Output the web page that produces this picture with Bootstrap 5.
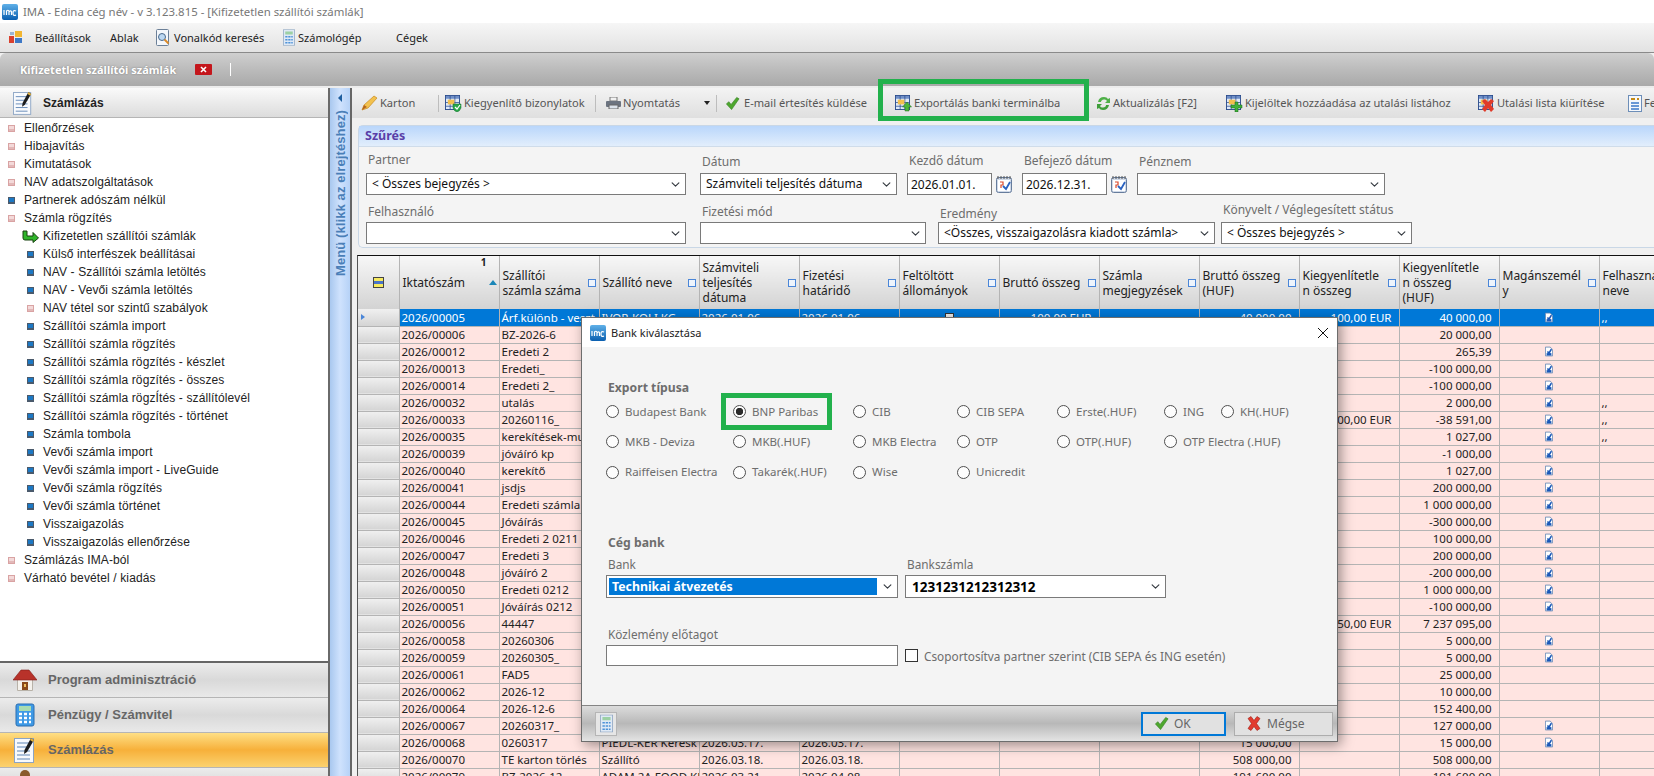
<!DOCTYPE html>
<html lang="hu">
<head>
<meta charset="UTF-8">
<title>IMA - Kifizetetlen szállítói számlák</title>
<link href="https://cdn.jsdelivr.net/npm/bootstrap@5.3.2/dist/css/bootstrap.min.css" rel="stylesheet">
<style>
html,body{height:776px;overflow:hidden}
body{position:relative;width:1654px;background:#f0f0f0;font-family:"Noto Sans","Liberation Sans",sans-serif;font-size:12px;color:#222;line-height:14px}
svg{flex:none;display:block}
.title-strip{height:23px;background:#fff;color:#777;padding-left:2px;gap:5px;font-size:11.4px}
.menu-strip{height:30px;background:linear-gradient(#f6f6f6,#e2e2e2);border-bottom:1px solid #8a8a8a;padding-left:9px;font-size:11px}
.menu-strip span{white-space:nowrap}
.mi-a{margin-left:13px;width:75px}.mi-b{width:45px}.mi-c{margin-left:3px;width:109px}.mi-d{margin-left:3px;width:98px}
.tab-strip{height:33px;background:linear-gradient(#cfcfcf,#bdbdbd 45%,#a9a9a9);border-radius:6px 6px 0 0;padding-left:20px;color:#fff;font-weight:700;font-size:11px;text-shadow:0 0 2px #777}
.tab-x{margin-left:19px}
.tab-sep{width:1px;height:13px;background:#fff;margin-left:18px}
.work-area{height:691px;border-top:2px solid #ececec}
.side-pane{width:330px;background:#fff;border-right:2px solid #6a6a6a}
.side-head{height:30px;background:linear-gradient(#fafafa,#dcdcdc);border-bottom:1px solid #b5b5b5;padding-left:13px;gap:10px;font-weight:700;color:#222;font-family:"Liberation Sans",sans-serif}
.tree{height:543px;padding-top:1px;font-family:"Liberation Sans",sans-serif;letter-spacing:.12px;margin:0}
.tree li{height:18px;display:flex;align-items:center;white-space:nowrap;padding-left:8px}
.tree li.sub{padding-left:27px}
.tree li.now{padding-left:22px}
.bul{width:7px;height:7px;margin-right:9px;flex:none}
.bul-p{background:#f3d9d9;border:1px solid #d9a3a3;box-shadow:inset 0 -2px 0 #e2b8b8}
.bul-b{background:#1c78c4;border:1px solid #4a5a6c;border-bottom-width:2px}
.acc-box{border-top:2px solid #666}
.acc-item{height:35px;background:linear-gradient(#ececec,#d9d9d9 50%,#e9e9e9);border-bottom:1px solid #b5b5b5;padding-left:13px;color:#666;font-weight:700;font-family:"Liberation Sans",sans-serif;font-size:13px;gap:11px}
.acc-item.on{background:linear-gradient(#fedf85,#f7b03a 50%,#fbd26f)}
.acc-ico{width:24px}
.split-bar{width:20px;background:linear-gradient(90deg,#a9c8ef,#cfe2fd 50%,#b6d2f7);padding-top:6px}
.split-txt{writing-mode:vertical-rl;transform:rotate(180deg);margin-top:8px;font:700 13px "Liberation Sans",sans-serif;color:#4a7fb8;white-space:nowrap;letter-spacing:.1px}
.split-arrow{width:0;height:0;border-top:4px solid transparent;border-bottom:4px solid transparent;border-right:4px solid #1f5f9f}
.right-pane{width:1304px;border-left:2px solid #666;background:#f0f0f0}
.tool-strip{height:30px;background:linear-gradient(#f3f3f3,#dfdfdf);white-space:nowrap;font-size:11.1px}
.tool-strip>*{flex:none}
.tool-item{height:30px;color:#555;gap:2px}
.tool-sep{width:1px;height:17px;background:#bdbdbd}
.t1{margin-left:9px;width:77px}.t2{margin-left:6px;width:150px}.t3{margin-left:10px;width:98px}.t4{margin-left:8px;width:158px}
.t4 svg{margin-right:2px}
.t5{margin-left:12px;width:201px}.t6{width:130px}.t7{width:252px}.t8{width:150px}
.tool-caret{width:0;height:0;border-left:3px solid transparent;border-right:3px solid transparent;border-top:4px solid #222;margin-right:6px}
.mark-box{position:relative}
.mark-box::after{content:"";position:absolute;border:5px solid #22b14c;pointer-events:none;z-index:3}
.t5.mark-box::after{left:-17px;top:-9px;width:211px;height:42px}
.radio-cell.mark-box::after{left:-12px;top:-4px;width:111px;height:37px}
.filter-box{margin:7px 0 0 6px;height:123px;background:#f4f4f4;border:1px solid #c9d7e6;border-right:0;border-radius:5px 0 0 5px}
.filter-head{height:21px;background:linear-gradient(#b9d6fb,#e2eefc);border-bottom:1px solid #cfdcea;color:#5a3fa8;font-weight:700;font-size:12.5px;padding-left:6px}
.filter-row{padding-left:7px}
.fr1{height:48px}.fr2{height:49px}
.fld{justify-content:flex-end}
.fld .form-label{margin:0 0 6px;padding-left:2px;color:#6d6d6d;white-space:nowrap;line-height:14px}
.fld .lb-a{margin-bottom:4px}.fld .lb-b{margin-bottom:1px}.fld .lb-c{margin-bottom:5px}.fld .lb-d{margin-bottom:3px}.fld .lb-e{margin-bottom:5px}
.w-a{width:320px;margin-right:14px}.w-b{width:197px;margin-right:10px}.w-c{width:115px}.w-d{width:248px}
.w-e{width:226px;margin-right:12px}.w-f{width:277px;margin-right:6px}.w-g{width:191px}
.win-sel,.win-inp{height:22px;min-height:0;border:1px solid #7a7a7a;border-radius:0;padding:0 18px 0 5px;font-size:12px;color:#111;background-color:#fff;box-shadow:none;line-height:20px}
.win-sel{background-position:right 4px center;background-size:11px 9px}
.win-date{width:85px;padding:0 2px 0 3px}
.grid-wrap{margin:7px 0 0 5px;height:521px;overflow:hidden;border-top:1px solid #111;border-left:1px solid #555}
.inv-tbl{table-layout:fixed;width:1300px;margin:0;border-collapse:collapse;font-size:11.5px;color:#222}
.inv-tbl th,.inv-tbl td{padding:0 2px;border:1px solid #b4b4b4;border-left:0;border-top:0;white-space:nowrap;overflow:hidden;font-weight:400;vertical-align:middle;box-shadow:none}
.inv-tbl th{height:53px;background:linear-gradient(#f7f7f7,#d3d3d3);font-size:12px;line-height:15px;position:relative;padding-left:3px;border-bottom:0}
.inv-tbl td{height:17px;line-height:15px;background:#ffe4e1;color:#222;padding-left:2px}
.inv-tbl td.num{text-align:right;padding-right:7px}
.inv-tbl td.rh{background:linear-gradient(#f0f0f0,#d4d4d4);padding:0 0 0 3px}
.inv-tbl tr.sel td:not(.rh){background:#0078d7;color:#fff}
.col-rh{width:41px}.col-n{width:100px}
.head-flex{gap:2px}
.flt-sq{width:8px;height:8px;border:1px solid #4a86d8;background:#eef4fc;flex:none;margin-right:1px}
.sort-no{position:absolute;right:12px;top:0;font-size:10px;font-weight:700;line-height:12px}
.sort-up{width:0;height:0;border-left:4px solid transparent;border-right:4px solid transparent;border-bottom:5px solid #1b87b8;flex:none}
.row-arrow{width:0;height:0;border-top:3px solid transparent;border-bottom:3px solid transparent;border-left:4px solid #4a86d8}
.mag-ico{margin:auto}
.dlg{position:absolute;left:581px;top:317px;width:757px;height:425px;z-index:5;background:#f4f4f4;border:1px solid #6d6d6d;box-shadow:3px 3px 12px rgba(0,0,0,.4);color:#6d6d6d}
.dlg-title{height:29px;background:#fff;padding-left:8px;gap:5px;color:#222;font-size:11px}
.dlg-x{margin-left:auto;margin-right:8px;width:12px;height:12px}
.dlg-body{padding-left:24px;font-size:11.8px}
.sec-cap{font-weight:700;color:#6d6d6d;padding-left:2px;font-size:12.2px}
.cap-a{margin-top:34px;height:14px}
.radio-grid{display:grid;grid-template-columns:127px 120px 104px 100px 107px 57px 100px;grid-template-rows:29px 31px 30px;margin-top:2px;font-size:11.5px}
.radio-cell{display:flex;align-items:center;gap:6px;white-space:nowrap}
.radio-cell .form-check-input{width:13px;height:13px;margin:0;border:1.5px solid #4f4f4f;background-color:#fdfdfd;flex:none;box-shadow:none}
.radio-cell .form-check-input:checked{background-color:#fdfdfd;border-color:#4f4f4f;background-image:radial-gradient(circle,#2b2b2b 0 3.4px,transparent 4px)}
.cap-b{margin-top:49px;height:14px}
.bank-labels{margin-top:7px;gap:7px}
.bl-a{width:292px;padding-left:2px}.bl-b{width:261px;padding-left:2px}
.bank-sel{width:292px;height:23px;padding:2px 20px 2px 2px;color:#fff;font-weight:700;font-size:12.3px;line-height:17px}
.bank-sel span{display:block;height:17px;background:#0078d7;padding-left:3px}
.acct-sel{width:261px;height:23px;padding-left:6px;font-weight:700;font-size:13.5px;color:#000}
.bank-row{margin-top:4px;gap:7px}
.note-label{margin-top:29px;padding-left:2px}
.note-row{margin-top:4px;gap:7px;align-items:center}
.note-inp{width:292px;height:21px}
.note-row .form-check-input{width:13px;height:13px;margin:0 6px 0 0;border:1px solid #333;border-radius:0;background-color:#fdfdfd;flex:none;box-shadow:none}
.dlg-foot{height:36px;margin-top:auto;background:linear-gradient(#dcdcdc,#b8b8b8 50%,#e4e4e4);border-top:1px solid #858585;padding:5px 4px 5px 13px;gap:8px}
.foot-calc{width:22px;height:24px;padding:0;background:#e6e6e6;border:1px solid #b5b5b5;border-radius:0}
.foot-btn{height:24px;padding:0 0 0 11px;border-radius:0;background:#e1e1e1;border:1px solid #adadad;font-size:12px;color:#666;gap:5px}
.foot-btn:hover{background:#e1e1e1;color:#666}
.btn-ok{width:85px;border:2px solid #0078d7;margin-left:auto}
.btn-no{width:99px}
</style>
</head>
<body>
<svg width="0" height="0" class="position-absolute">
  <defs>
    <linearGradient id="logoFill" x1="0" y1="0" x2="0" y2="1"><stop offset="0" stop-color="#5fb0e8"/><stop offset="1" stop-color="#0a5fb0"/></linearGradient>
    <symbol id="i-logo" viewBox="0 0 16 16"><rect width="16" height="16" rx="2" fill="url(#logoFill)"/><path d="M2 6v5M4.500 11V7q1.500-1.500 2.500 0v4M7 8q1.500-2 2.500-.5V11M14 7q-3-1.500-3 2t3 2" fill="none" stroke="#fff" stroke-width="1.200"/></symbol>
    <symbol id="i-tbl" viewBox="0 0 16 16"><rect x=".5" y=".5" width="15" height="15" fill="#dfe9f8" stroke="#2b4c8c"/><rect x="1" y="1" width="14" height="3" fill="#6f8fc8"/><path d="M1 8h14M1 12h14M5.500 1v14M10.500 1v14" stroke="#2b4c8c" stroke-width=".8"/><rect x="3" y="5" width="7" height="5" fill="#f3c04e"/></symbol>
    <symbol id="i-check" viewBox="0 0 16 16"><path d="M1.500 8.500 4 6l2.500 3L12.500 1.500 15 3l-8 11.500z" fill="#4ea72e" stroke="#2f7a1c" stroke-width=".6"/></symbol>
    <symbol id="i-cross" viewBox="0 0 16 16"><path d="M2 3 5 1l3 4 3-4 3 2-3.500 5L14 13l-3 2-3-4-3 4-3-2 3.500-5z" fill="#e23b2e" stroke="#9c1f16" stroke-width=".6"/></symbol>
    <symbol id="i-note" viewBox="0 0 22 26"><rect x=".5" y="1.500" width="19" height="24" fill="#f8fafd" stroke="#8ba4c4"/><path d="M3 6h13M3 10h13M3 14h13M3 18h13M3 22h13" stroke="#5f85b5"/><path d="M17 1l3 2-7 12-3 2 .5-4z" fill="#1c1c1c"/><path d="M17 1l3 2-1 2-3-2z" fill="#e2b13c"/></symbol>
    <symbol id="i-doc" viewBox="0 0 10 12"><path d="M.5.5h6l3 3v8h-9z" fill="#fff" stroke="#5b7fae"/><path d="M3 6l2 2 3-5" fill="none" stroke="#1a58b8" stroke-width="2"/><rect x="2" y="8" width="6" height="3" fill="#1a58b8"/></symbol>
    <symbol id="i-cal" viewBox="0 0 16 18"><rect x=".5" y="2.500" width="15" height="15" rx="2" fill="#cfd9e8" stroke="#667c9c"/><rect x="2" y="5" width="12" height="11" fill="#fff"/><path d="M2 1v3M5 1v3M8 1v3M11 1v3M14 1v3" stroke="#555"/><path d="M4 7h3v3H5v3" fill="none" stroke="#d9482b" stroke-width="1.200"/><path d="M7 11l3 3 4-7" fill="none" stroke="#2a62c0" stroke-width="1.800"/></symbol>
    <symbol id="i-calc" viewBox="0 0 16 22"><rect x=".5" y=".5" width="15" height="21" fill="#dfe9f5" stroke="#8fa6c2"/><rect x="3" y="3" width="10" height="4" fill="#9cd0a4"/><path d="M3 10h3M7 10h3M11 10h2M3 14h3M7 14h3M11 14h2M3 18h3M7 18h3M11 18h2" stroke="#4f93d8" stroke-width="2"/></symbol>
  </defs>
</svg>

<header>
  <div class="title-strip d-flex align-items-center">
    <svg width="16" height="16"><use href="#i-logo"/></svg>
    <span>IMA - Edina cég név - v 3.123.815 - [Kifizetetlen szállítói számlák]</span>
  </div>
  <nav class="menu-strip d-flex align-items-center">
    <svg width="13" height="13" viewBox="0 0 13 13"><rect x="0" y="5" width="5" height="7" fill="#d9402e"/><rect x="6" y="0" width="7" height="6" fill="#f2b632"/><rect x="6" y="7" width="7" height="5" fill="#3d78c6"/><rect x="1" y="1" width="4" height="3" fill="#9bb4d4"/></svg>
    <span class="mi-a">Beállítások</span>
    <span class="mi-b">Ablak</span>
    <svg width="16" height="17" viewBox="0 0 16 17"><rect x="1.500" y=".5" width="12" height="16" rx="1" fill="#f4f7fb" stroke="#6c8098"/><circle cx="7" cy="8" r="3.500" fill="#bcd8f2" stroke="#4a6a8c"/><path d="M9.500 10.500l4 4" stroke="#d98a2b" stroke-width="2"/></svg>
    <span class="mi-c">Vonalkód keresés</span>
    <svg width="12" height="17" viewBox="0 0 16 22"><use href="#i-calc"/></svg>
    <span class="mi-d">Számológép</span>
    <span>Cégek</span>
  </nav>
  <div class="tab-strip d-flex align-items-center">
    <span>Kifizetetlen szállítói számlák</span>
    <svg class="tab-x" width="17" height="11" viewBox="0 0 17 11"><rect width="17" height="11" rx="1" fill="#c4161c"/><path d="M6 3l5 5M11 3l-5 5" stroke="#fff" stroke-width="1.600"/></svg>
    <span class="tab-sep"></span>
  </div>
</header>

<main class="work-area d-flex">
  <aside class="side-pane flex-none">
    <div class="side-head d-flex align-items-center">
      <svg width="20" height="24"><use href="#i-note"/></svg>
      <span>Számlázás</span>
    </div>
    <ul class="tree list-unstyled">
      <li><span class="bul bul-p"></span>Ellenőrzések</li>
      <li><span class="bul bul-p"></span>Hibajavítás</li>
      <li><span class="bul bul-p"></span>Kimutatások</li>
      <li><span class="bul bul-p"></span>NAV adatszolgáltatások</li>
      <li><span class="bul bul-b"></span>Partnerek adószám nélkül</li>
      <li><span class="bul bul-p"></span>Számla rögzítés</li>
      <li class="now"><svg class="me-1" width="17" height="13" viewBox="0 0 17 13"><path d="M1 1h4v5h6V2.500L16.500 8 11 12.500V10H3Q1 10 1 8z" fill="#2fb52a" stroke="#16400f"/></svg>Kifizetetlen szállítói számlák</li>
      <li class="sub"><span class="bul bul-b"></span>Külső interfészek beállításai</li>
      <li class="sub"><span class="bul bul-b"></span>NAV - Szállítói számla letöltés</li>
      <li class="sub"><span class="bul bul-b"></span>NAV - Vevői számla letöltés</li>
      <li class="sub"><span class="bul bul-p"></span>NAV tétel sor szintű szabályok</li>
      <li class="sub"><span class="bul bul-b"></span>Szállítói számla import</li>
      <li class="sub"><span class="bul bul-b"></span>Szállítói számla rögzítés</li>
      <li class="sub"><span class="bul bul-b"></span>Szállítói számla rögzítés - készlet</li>
      <li class="sub"><span class="bul bul-b"></span>Szállítói számla rögzítés - összes</li>
      <li class="sub"><span class="bul bul-b"></span>Szállítói számla rögzÍtés - szállítólevél</li>
      <li class="sub"><span class="bul bul-b"></span>Szállítói számla rögzítés - történet</li>
      <li class="sub"><span class="bul bul-b"></span>Számla tombola</li>
      <li class="sub"><span class="bul bul-b"></span>Vevői számla import</li>
      <li class="sub"><span class="bul bul-b"></span>Vevői számla import - LiveGuide</li>
      <li class="sub"><span class="bul bul-b"></span>Vevői számla rögzítés</li>
      <li class="sub"><span class="bul bul-b"></span>Vevői számla történet</li>
      <li class="sub"><span class="bul bul-b"></span>Visszaigazolás</li>
      <li class="sub"><span class="bul bul-b"></span>Visszaigazolás ellenőrzése</li>
      <li><span class="bul bul-p"></span>Számlázás IMA-ból</li>
      <li><span class="bul bul-p"></span>Várható bevétel / kiadás</li>
    </ul>
    <div class="acc-box">
      <div class="acc-item d-flex align-items-center">
        <svg class="acc-ico" width="24" height="22" viewBox="0 0 24 22"><path d="M4.500 10.500h15v11h-15z" fill="#f4f1ec" stroke="#b8b2a8"/><rect x="9" y="13" width="6" height="8" fill="#8a4a1c"/><rect x="11" y="15" width="2" height="3" fill="#f0c060"/><path d="M0 11 8 1h8l8 10z" fill="#b8322a" stroke="#7c1c18" stroke-width=".6"/></svg>
        <span>Program adminisztráció</span>
      </div>
      <div class="acc-item d-flex align-items-center">
        <svg class="acc-ico" width="24" height="24" viewBox="0 0 24 24"><rect x="3" y="1" width="18" height="22" rx="2" fill="#3f9ae6" stroke="#2c6fb0"/><rect x="6" y="3" width="12" height="5" fill="#a8dcb0"/><path d="M6 11h3M11 11h3M16 11h2M6 15h3M11 15h3M16 15h2M6 19h3M11 19h3M16 19h2" stroke="#fff" stroke-width="2.500"/></svg>
        <span>Pénzügy / Számvitel</span>
      </div>
      <div class="acc-item on d-flex align-items-center">
        <svg class="acc-ico" width="22" height="26" viewBox="0 0 22 26"><use href="#i-note"/></svg>
        <span>Számlázás</span>
      </div>
      <div class="acc-item d-flex align-items-start">
        <svg class="acc-ico" width="24" height="24" viewBox="0 0 24 24"><circle cx="12" cy="7" r="5" fill="#8a5a2c"/><path d="M3 24q1-10 9-10t9 10z" fill="#3f5f8f"/></svg>
      </div>
    </div>
  </aside>

  <div class="split-bar d-flex flex-column align-items-center">
    <span class="split-arrow"></span>
    <span class="split-txt">Menü (klikk az elrejtéshez)</span>
  </div>

  <section class="right-pane">
    <div class="tool-strip d-flex align-items-center">
      <div class="tool-item t1 d-flex align-items-center">
        <svg width="17" height="16" viewBox="0 0 17 16"><path d="M1 15l2-5L13 1l3 2-9 10z" fill="#f2c14e" stroke="#c98a1e" stroke-width=".7"/><path d="M1 15l2-5 3 2z" fill="#b5651d"/></svg>
        <span>Karton</span>
      </div>
      <span class="tool-sep"></span>
      <div class="tool-item t2 d-flex align-items-center">
        <svg width="17" height="17" viewBox="0 0 17 17"><use href="#i-tbl" width="15" height="15"/><path d="M8 9h8v4q-1 3-4 4-3-1-4-4z" fill="#2aa84a" stroke="#136b2a" stroke-width=".5"/><path d="M10 12l2 2 3-4" fill="none" stroke="#fff" stroke-width="1.200"/></svg>
        <span>Kiegyenlítő bizonylatok</span>
      </div>
      <span class="tool-sep"></span>
      <div class="tool-item t3 d-flex align-items-center">
        <svg width="15" height="12" viewBox="0 0 15 12"><rect x="4" y="0" width="7" height="4" fill="#f2f2f2" stroke="#777"/><rect x="0" y="4" width="15" height="6" rx="1" fill="#6c7480"/><rect x="3" y="8" width="9" height="4" fill="#dce3ec" stroke="#666"/></svg>
        <span>Nyomtatás</span>
      </div>
      <span class="tool-caret"></span>
      <span class="tool-sep"></span>
      <div class="tool-item t4 d-flex align-items-center">
        <svg width="15" height="15"><use href="#i-check"/></svg>
        <span>E-mail értesítés küldése</span>
      </div>
      <div class="tool-item t5 mark-box d-flex align-items-center">
        <svg width="17" height="17" viewBox="0 0 17 17"><use href="#i-tbl" width="15" height="15"/><path d="M12 7l4.500 5H14v4h-4v-4H7.500z" fill="#4bb53c" stroke="#1d6d1a" stroke-width=".5"/></svg>
        <span>Exportálás banki terminálba</span>
      </div>
      <div class="tool-item t6 d-flex align-items-center">
        <svg width="15" height="15" viewBox="0 0 15 15"><path d="M2 6q1-5 6-5 3 0 4 2l2-1v5H9l2-2Q10 3 8 3.500 5 4 5 6z" fill="#4fb048"/><path d="M13 9q-1 5-6 5-3 0-4-2l-2 1V8h5l-2 2q1 2 3 1.500 3-.5 3-2.500z" fill="#3f9e3a"/></svg>
        <span>Aktualizálás [F2]</span>
      </div>
      <div class="tool-item t7 d-flex align-items-center">
        <svg width="17" height="17" viewBox="0 0 17 17"><use href="#i-tbl" width="15" height="15"/><path d="M9 7h3v3h4v3h-4v4H9v-4H5v-3h4z" fill="#3fb03a" stroke="#17611a" stroke-width=".5"/></svg>
        <span>Kijelöltek hozzáadása az utalási listához</span>
      </div>
      <div class="tool-item t8 d-flex align-items-center">
        <svg width="17" height="17" viewBox="0 0 17 17"><use href="#i-tbl" width="15" height="15"/><path d="M4 6l3-2 3 3 3-3 3 2-3 4 3 4-3 3-3-4-3 4-3-3 3-4z" fill="#e03b2a"/></svg>
        <span>Utalási lista kiürítése</span>
      </div>
      <div class="tool-item d-flex align-items-center">
        <svg width="14" height="17" viewBox="0 0 14 17"><rect x=".5" y=".5" width="13" height="16" fill="#f5f8fc" stroke="#6d8eb8"/><path d="M3 4h4M9 4h2" stroke="#c58a14" stroke-width="2"/><path d="M3 8h8M3 11h8M3 14h8" stroke="#3c78c8" stroke-width="1.400"/></svg>
        <span>Fe</span>
      </div>
    </div>

    <div class="filter-box">
      <div class="filter-head d-flex align-items-center">Szűrés</div>
      <div class="filter-row fr1 d-flex">
        <div class="fld w-a d-flex flex-column"><label class="form-label">Partner</label><select class="form-select win-sel"><option>&lt; Összes bejegyzés &gt;</option></select></div>
        <div class="fld w-b d-flex flex-column"><label class="form-label lb-a">Dátum</label><select class="form-select win-sel"><option>Számviteli teljesítés dátuma</option></select></div>
        <div class="fld w-c d-flex flex-column"><label class="form-label lb-e">Kezdő dátum</label><div class="d-flex align-items-center gap-1"><input class="form-control win-inp win-date" value="2026.01.01."><svg width="16" height="18"><use href="#i-cal"/></svg></div></div>
        <div class="fld w-c d-flex flex-column"><label class="form-label lb-e">Befejező dátum</label><div class="d-flex align-items-center gap-1"><input class="form-control win-inp win-date" value="2026.12.31."><svg width="16" height="18"><use href="#i-cal"/></svg></div></div>
        <div class="fld w-d d-flex flex-column"><label class="form-label lb-a">Pénznem</label><select class="form-select win-sel"><option></option></select></div>
      </div>
      <div class="filter-row fr2 d-flex">
        <div class="fld w-a d-flex flex-column"><label class="form-label lb-d">Felhasználó</label><select class="form-select win-sel"><option></option></select></div>
        <div class="fld w-e d-flex flex-column"><label class="form-label lb-d">Fizetési mód</label><select class="form-select win-sel"><option></option></select></div>
        <div class="fld w-f d-flex flex-column"><label class="form-label lb-b">Eredmény</label><select class="form-select win-sel"><option>&lt;Összes, visszaigazolásra kiadott számla&gt;</option></select></div>
        <div class="fld w-g d-flex flex-column"><label class="form-label lb-c">Könyvelt / Véglegesített státus</label><select class="form-select win-sel"><option>&lt; Összes bejegyzés &gt;</option></select></div>
      </div>
    </div>

    <div class="grid-wrap">
      <table class="table inv-tbl">
        <colgroup><col class="col-rh"><col class="col-n"><col class="col-n"><col class="col-n"><col class="col-n"><col class="col-n"><col class="col-n"><col class="col-n"><col class="col-n"><col class="col-n"><col class="col-n"><col class="col-n"><col class="col-n"><col class="col-n"></colgroup>
        <thead><tr id="headRow"></tr></thead>
        <tbody id="invBody"></tbody>
      </table>
    </div>
  </section>
</main>

<!-- Bank kiválasztása ablak -->
<div class="dlg d-flex flex-column">
  <div class="dlg-title d-flex align-items-center">
    <svg width="16" height="16"><use href="#i-logo"/></svg>
    <span>Bank kiválasztása</span>
    <svg class="dlg-x" viewBox="0 0 12 12"><path d="M1 1l10 10M11 1 1 11" stroke="#111" stroke-width="1"/></svg>
  </div>
  <div class="dlg-body d-flex flex-column flex-grow-1">
    <div class="sec-cap cap-a">Export típusa</div>
    <div class="radio-grid" id="radioGrid"></div>
    <div class="sec-cap cap-b">Cég bank</div>
    <div class="bank-labels d-flex"><span class="bl-a">Bank</span><span class="bl-b">Bankszámla</span></div>
    <div class="bank-row d-flex">
      <div class="form-select win-sel bank-sel"><span>Technikai átvezetés</span></div>
      <select class="form-select win-sel acct-sel"><option>1231231212312312</option></select>
    </div>
    <div class="note-label">Közlemény előtagot</div>
    <div class="note-row d-flex">
      <input class="form-control win-inp note-inp">
      <label class="d-flex align-items-center"><input class="form-check-input" type="checkbox">Csoportosítva partner szerint (CIB SEPA és ING esetén)</label>
    </div>
  </div>
  <div class="dlg-foot d-flex align-items-center">
    <button class="btn foot-calc d-flex align-items-center justify-content-center"><svg width="13" height="19" viewBox="0 0 16 22"><use href="#i-calc"/></svg></button>
    <button class="btn foot-btn btn-ok d-flex align-items-center"><svg width="15" height="15"><use href="#i-check"/></svg>OK</button>
    <button class="btn foot-btn btn-no d-flex align-items-center"><svg width="16" height="17"><use href="#i-cross"/></svg>Mégse</button>
  </div>
</div>

<script src="https://cdn.jsdelivr.net/npm/bootstrap@5.3.2/dist/js/bootstrap.bundle.min.js"></script>
<script>
// fejléc oszlopok
const heads = ['Iktatószám','Szállítói<br>számla száma','Szállító neve','Számviteli<br>teljesítés<br>dátuma','Fizetési<br>határidő','Feltöltött<br>állományok','Bruttó összeg','Számla<br>megjegyzések','Bruttó összeg<br>(HUF)','Kiegyenlítetle<br>n összeg','Kiegyenlítetle<br>n összeg<br>(HUF)','Magánszemél<br>y','Felhasználó<br>neve'];
const headIcon = '<svg width="11" height="11" viewBox="0 0 11 11" class="mx-auto"><rect x=".5" y=".5" width="10" height="10" fill="#f7ea5e" stroke="#444"/><rect x="1" y="4" width="9" height="3" fill="#4a74c9"/></svg>';
let headHtml = '<th>' + headIcon + '</th>';
heads.forEach(function (h, i) {
  let tail = '<span class="flt-sq"></span>';
  let extra = '';
  if (i === 0) { tail = '<span class="sort-up"></span>'; extra = '<span class="sort-no">1</span>'; }
  const last = i === heads.length - 1 ? '' : tail;
  headHtml += '<th>' + extra + '<div class="head-flex d-flex align-items-center justify-content-between"><span>' + h + '</span>' + last + '</div></th>';
});
document.getElementById('headRow').innerHTML = headHtml;

// sorok: iktató, számla, szállító, dátum, határidő, bruttó, bruttó huf, kiegy, kiegy huf, magán, felhasználó
const rows = [
  ['00005','Árf.különb - veszt','IVOR-KOLI KG','2026.01.06.','2026.01.06.','100,00 EUR','40 000,00','100,00 EUR','40 000,00',1,',,'],
  ['00006','BZ-2026-6','','','','','','','20 000,00',0,''],
  ['00012','Eredeti 2','','','','','','','265,39',1,''],
  ['00013','Eredeti_','','','','','','','-100 000,00',1,''],
  ['00014','Eredeti 2_','','','','','','','-100 000,00',1,''],
  ['00032','utalás','','','','','','','2 000,00',1,',,'],
  ['00033','20260116_','','','','','','100,00 EUR','-38 591,00',1,',,'],
  ['00035','kerekítések-munka','','','','','','','1 027,00',1,',,'],
  ['00039','jóváíró kp','','','','','','','-1 000,00',1,''],
  ['00040','kerekítő','','','','','','','1 027,00',1,''],
  ['00041','jsdjs','','','','','','','200 000,00',1,''],
  ['00044','Eredeti számla','','','','','','','1 000 000,00',1,''],
  ['00045','Jóváírás','','','','','','','-300 000,00',1,''],
  ['00046','Eredeti 2 0211','','','','','','','100 000,00',1,''],
  ['00047','Eredeti 3','','','','','','','200 000,00',1,''],
  ['00048','jóváíró 2','','','','','','','-200 000,00',1,''],
  ['00050','Eredeti 0212','','','','','','','1 000 000,00',1,''],
  ['00051','Jóváírás 0212','','','','','','','-100 000,00',1,''],
  ['00056','44447','','','','','','050,00 EUR','7 237 095,00',0,''],
  ['00058','20260306','','','','','','','5 000,00',1,''],
  ['00059','20260305_','','','','','','','5 000,00',1,''],
  ['00061','FAD5','','','','','','','25 000,00',0,''],
  ['00062','2026-12','','','','','','','10 000,00',0,''],
  ['00064','2026-12-6','','','','','','','152 400,00',0,''],
  ['00067','20260317_','','','','','','','127 000,00',1,''],
  ['00068','0260317','PIEDL-KER Keresk','2026.03.17.','2026.03.17.','','15 000,00','','15 000,00',1,''],
  ['00070','TE karton törlés','Szállító','2026.03.18.','2026.03.18.','','508 000,00','','508 000,00',0,''],
  ['00079','BZ-2026-12','ADAM 2A FOOD KFT','2026.03.21.','2026.04.08.','','191 600,00','','191 600,00',0,'']
];
const docIcon = '<svg class="mag-ico" width="8" height="11"><use href="#i-doc"/></svg>';
const clipIcon = '<svg class="mx-auto" width="9" height="8" viewBox="0 0 9 8"><rect x=".5" y=".5" width="8" height="7" fill="#eee" stroke="#333"/></svg>';
let bodyHtml = '';
rows.forEach(function (r, i) {
  bodyHtml += '<tr' + (i === 0 ? ' class="sel"' : '') + '>'
    + '<td class="rh">' + (i === 0 ? '<div class="row-arrow"></div>' : '') + '</td>'
    + '<td>2026/' + r[0] + '</td><td>' + r[1] + '</td><td>' + r[2] + '</td><td>' + r[3] + '</td><td>' + r[4] + '</td>'
    + '<td>' + (i === 0 ? clipIcon : '') + '</td>'
    + '<td class="num">' + r[5] + '</td><td></td>'
    + '<td class="num">' + r[6] + '</td><td class="num">' + r[7] + '</td><td class="num">' + r[8] + '</td>'
    + '<td>' + (r[9] ? docIcon : '') + '</td><td>' + r[10] + '</td></tr>';
});
document.getElementById('invBody').innerHTML = bodyHtml;

// export típusok
const banks = ['Budapest Bank','BNP Paribas','CIB','CIB SEPA','Erste(.HUF)','ING','KH(.HUF)','MKB - Deviza','MKB(.HUF)','MKB Electra','OTP','OTP(.HUF)','OTP Electra (.HUF)','','Raiffeisen Electra','Takarék(.HUF)','Wise','Unicredit'];
document.getElementById('radioGrid').innerHTML = banks.map(function (b) {
  if (!b) return '<span></span>';
  const on = b === 'BNP Paribas';
  return '<label class="radio-cell' + (on ? ' mark-box' : '') + '"><input class="form-check-input" type="radio" name="bank"' + (on ? ' checked' : '') + '>' + b + '</label>';
}).join('');
</script>
</body>
</html>
